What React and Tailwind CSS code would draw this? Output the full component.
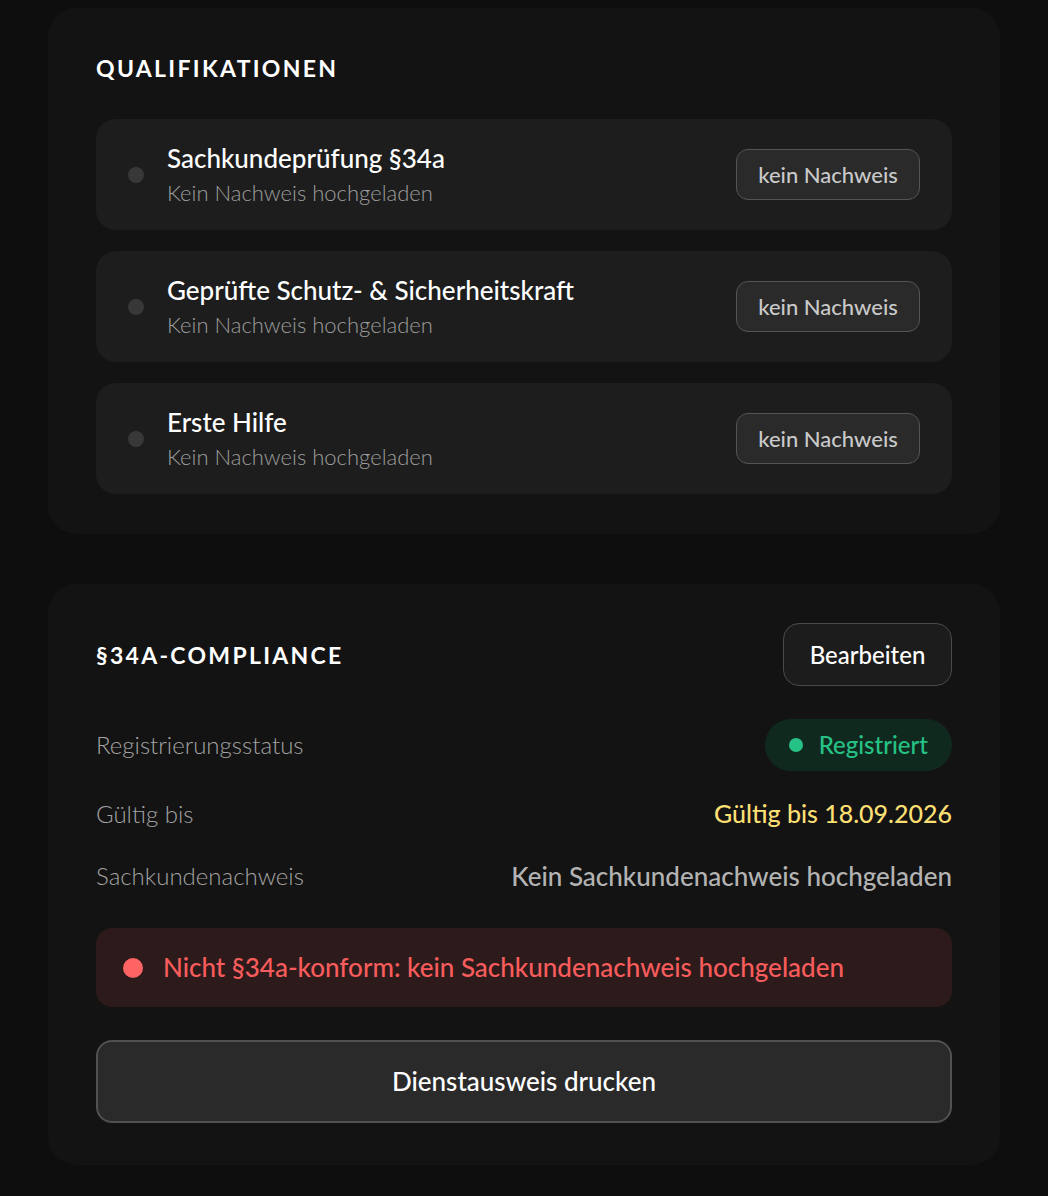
import React from "react";

const font = { fontFamily: "Lato, 'Noto Sans', sans-serif" };

function QualRow({ title }) {
  return (
    <div className="flex items-center justify-between rounded-[20px] bg-[#1d1d1d] pl-[32px] pr-[32px] h-[111px]">
      <div className="flex items-center gap-[23px]">
        <span className="w-[16px] h-[16px] rounded-full bg-[#383838]" />
        <div className="flex flex-col gap-[3px]">
          <span className="text-[26px] leading-[34px] font-medium text-white">{title}</span>
          <span className="text-[22px] leading-[30px] font-light text-[#9d9d9d]">Kein Nachweis hochgeladen</span>
        </div>
      </div>
      <button className="h-[51px] w-[184px] rounded-[12px] border-[1.5px] border-[#545454] bg-[#2a2a2a] text-[22px] font-medium text-[#c9c9c9]">
        kein Nachweis
      </button>
    </div>
  );
}

export default function App() {
  return (
    <div className="min-h-[1196px] bg-[#0e0e0e] px-[48px] pt-[8px] pb-[32px]" style={font}>
      <div className="rounded-[28px] bg-[#131313] px-[48px] pt-[44px] pb-[40px]">
        <h2 className="text-[23px] leading-[32px] font-bold tracking-[0.1em] text-white">QUALIFIKATIONEN</h2>
        <div className="mt-[35px] flex flex-col gap-[21px]">
          <QualRow title="Sachkundeprüfung §34a" />
          <QualRow title="Geprüfte Schutz- & Sicherheitskraft" />
          <QualRow title="Erste Hilfe" />
        </div>
      </div>

      <div className="mt-[50px] rounded-[28px] bg-[#131313] px-[48px] pt-[39px] pb-[42px]">
        <div className="flex items-center justify-between">
          <h2 className="text-[23px] leading-[32px] font-bold tracking-[0.1em] text-white">§34A-COMPLIANCE</h2>
          <button className="h-[63px] w-[169px] rounded-[16px] border-[1.5px] border-[#4a4a4a] bg-[#1c1c1c] text-[24px] font-medium text-white">
            Bearbeiten
          </button>
        </div>
        <div className="mt-[33px] flex items-center justify-between h-[52px]">
          <span className="text-[24px] font-light text-[#a3a3a3]">Registrierungsstatus</span>
          <span className="flex h-[52px] items-center gap-[16px] rounded-full bg-[#10291f] px-[24px] text-[24px] font-medium text-[#25c185]">
            <span className="w-[14px] h-[14px] rounded-full bg-[#25c185]" />
            Registriert
          </span>
        </div>
        <div className="mt-[26px] flex items-center justify-between h-[34px]">
          <span className="text-[24px] font-light text-[#a3a3a3]">Gültig bis</span>
          <span className="text-[25px] font-medium text-[#fbdf73]">Gültig bis 18.09.2026</span>
        </div>
        <div className="mt-[28px] flex items-center justify-between h-[34px]">
          <span className="text-[24px] font-light text-[#a3a3a3]">Sachkundenachweis</span>
          <span className="text-[26px] font-medium text-[#b3b3b3]">Kein Sachkundenachweis hochgeladen</span>
        </div>
        <div className="mt-[35px] flex h-[79px] items-center gap-[20px] rounded-[16px] bg-[#2d1a1b] px-[27px]">
          <span className="w-[20px] h-[20px] rounded-full bg-[#ff6464]" />
          <span className="text-[26px] font-medium text-[#f85c5c]">Nicht §34a-konform: kein Sachkundenachweis hochgeladen</span>
        </div>
        <button className="mt-[33px] flex h-[83px] w-full items-center justify-center rounded-[16px] border-2 border-[#515151] bg-[#2a2a2a] text-[26px] font-medium text-white">
          Dienstausweis drucken
        </button>
      </div>
    </div>
  );
}
